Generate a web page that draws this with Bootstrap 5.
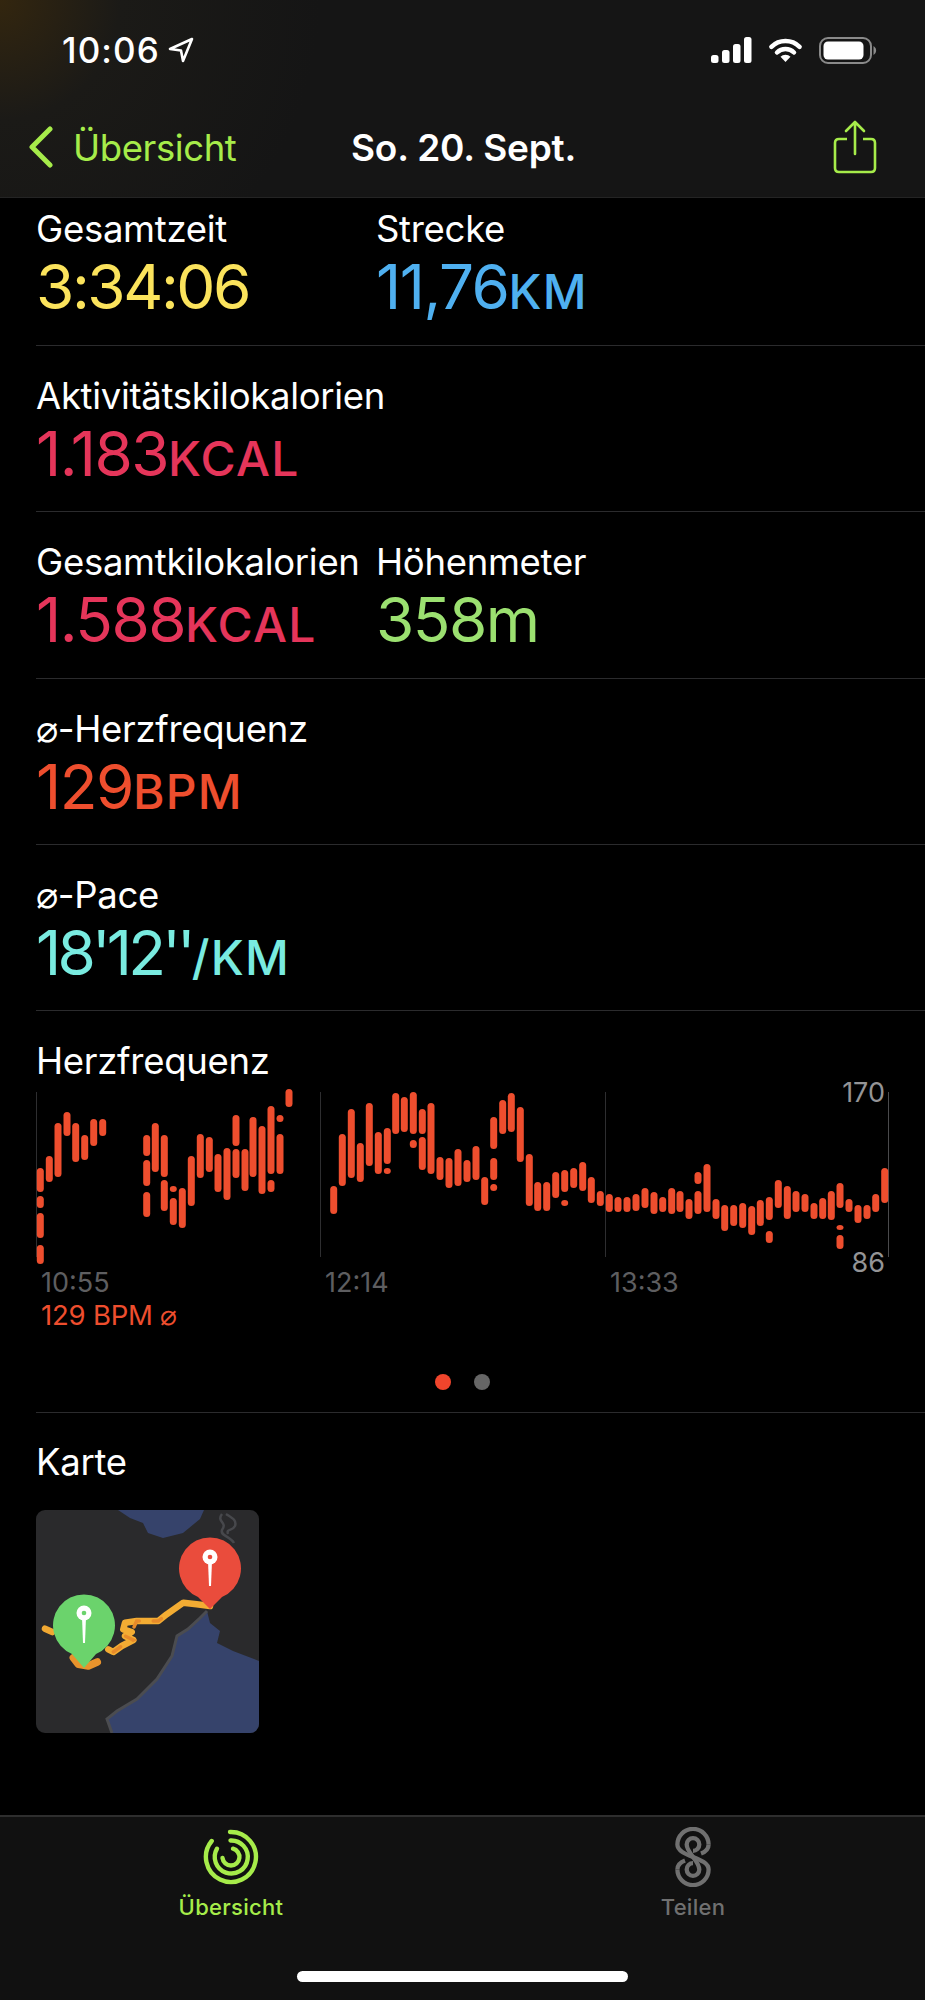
<!DOCTYPE html>
<html lang="de">

<head>
    <meta charset="UTF-8">
    <title>Aktivität</title>
    <meta name="viewport" content="width=device-width, initial-scale=1">
    <link href="https://cdn.jsdelivr.net/npm/bootstrap@5.3.0/dist/css/bootstrap.min.css" rel="stylesheet">
    <style>
        body {
            background-color: #000;
            color: #fff;
            font-family: "Inter", "Liberation Sans", sans-serif;
            width: 925px;
            height: 2000px;
            overflow: hidden;
        }

        .top-area {
            height: 198px;
            background: radial-gradient(circle at 0 0, #33260f 0, #1b1a17 120px, #151515 320px);
            border-bottom: 1px solid #242424;
        }

        .status-line {
            height: 100px;
            padding: 0 48px 0 62px;
        }

        .clock {
            font-size: 35px;
            font-weight: 500;
            letter-spacing: 1.1px;
        }

        .nav-line {
            height: 97px;
            padding: 0 48px 4px 29px;
        }

        .back-text {
            color: #a6ec4a;
            font-size: 36.5px;
            margin: 4px 0 0 18px;
            letter-spacing: -0.4px;
        }

        .nav-title {
            left: 351px;
            top: 20px;
            font-size: 37px;
            font-weight: 600;
            letter-spacing: -0.2px;
        }

        .metric-row {
            height: 166.25px;
            margin-left: 36px;
            padding-top: 28px;
            border-bottom: 1px solid #2b2b2d;
        }

        .first-row {
            height: 148px;
            padding-top: 9px;
        }

        .metric-cell {
            width: 340px;
        }

        .metric-label {
            font-size: 36.5px;
            line-height: 44px;
            letter-spacing: -0.3px;
            white-space: nowrap;
        }

        .metric-value {
            font-size: 62px;
            line-height: 70px;
            margin-top: 1px;
            font-weight: 400;
            letter-spacing: -1.5px;
        }

        .time-value {
            letter-spacing: -2.4px;
        }

        .metric-unit {
            font-size: 48px;
            font-weight: 500;
            text-transform: uppercase;
            letter-spacing: 1.2px;
        }

        .pace-digits {
            letter-spacing: -3.8px;
        }

        .c-yellow { color: #fbe35c; }
        .c-blue { color: #4fb0f0; }
        .c-pink { color: #e5355a; }
        .c-green { color: #9be070; }
        .c-red { color: #ee4e2e; }
        .c-teal { color: #79ebe0; }

        .chart-block {
            height: 402px;
            margin-left: 36px;
            padding-top: 28px;
            border-bottom: 1px solid #2b2b2d;
        }

        .chart-wrap {
            width: 925px;
            margin-left: -36px;
        }

        .chart-canvas {
            margin-top: -8px;
        }

        .chart-note {
            font-size: 27.5px;
            line-height: 30px;
            margin-left: 41px;
            letter-spacing: -0.2px;
        }

        .pager {
            margin: 44px 0 0 -36px;
            gap: 23px;
        }

        .pager-dot {
            width: 16px;
            height: 16px;
            border-radius: 50%;
            background-color: #666;
        }

        .pager-dot.on {
            background-color: #f0452c;
        }

        .map-section {
            margin-left: 36px;
            padding-top: 27px;
        }

        .map-box {
            width: 223px;
            height: 223px;
            margin-top: 26px;
            border-radius: 9px;
        }

        .tab-area {
            height: 185px;
            background-color: #111;
            border-top: 2px solid #2e2e2e;
        }

        .tab-item {
            width: 200px;
            font-size: 22px;
            font-weight: 500;
            padding-top: 10px;
            letter-spacing: 0.3px;
        }

        .tab-on { color: #a6ec4a; }
        .tab-off { color: #707070; }

        .tab-one { margin-left: 131px; }
        .tab-two { margin-left: 262px; }

        .home-bar {
            left: 297px;
            bottom: 18px;
            width: 331px;
            height: 11px;
            border-radius: 6px;
            background-color: #fff;
        }
    </style>
</head>

<body>
    <div class="d-flex flex-column vh-100">
        <header class="top-area flex-shrink-0">
            <div class="status-line d-flex align-items-center">
                <span class="clock">10:06</span>
                <svg class="ms-2" width="26" height="26" viewBox="0 0 26 26"><path d="M24 2 L2 12 L13 13.5 L15 24 Z" fill="none" stroke="#fff" stroke-width="2.6" stroke-linejoin="round"/></svg>
                <div class="ms-auto d-flex align-items-center gap-3">
                    <svg width="41" height="26" viewBox="0 0 41 26"><g fill="#fff"><rect x="0" y="18" width="7.500" height="8" rx="2.500"/><rect x="11" y="13" width="7.500" height="13" rx="2.500"/><rect x="22" y="7" width="7.500" height="19" rx="2.500"/><rect x="33" y="0" width="7.500" height="26" rx="2.500"/></g></svg>
                    <svg width="35" height="26" viewBox="0 0 35 26"><path d="M3.400 9.900 A20 20 0 0 1 31.600 9.900 M9 15.500 A12 12 0 0 1 26 15.500" fill="none" stroke="#fff" stroke-width="4.500" stroke-linecap="round"/><path d="M17.500 25 L12.500 19.800 A7 7 0 0 1 22.500 19.800 Z" fill="#fff"/></svg>
                    <svg width="58" height="27" viewBox="0 0 58 27"><rect x="1" y="1" width="51" height="25" rx="8" fill="none" stroke="#8a8a8a" stroke-width="2"/><rect x="4.500" y="4.500" width="40" height="18" rx="4.500" fill="#fff"/><path d="M54.500 9 C58 11 58 16 54.500 18 Z" fill="#8a8a8a"/></svg>
                </div>
            </div>
            <div class="nav-line d-flex align-items-center position-relative">
                <svg width="26" height="42" viewBox="0 0 26 42"><path d="M21 3 L3 21 L21 39" fill="none" stroke="#a6ec4a" stroke-width="5" stroke-linecap="round" stroke-linejoin="round"/></svg>
                <span class="back-text">Übersicht</span>
                <span class="nav-title position-absolute">So. 20. Sept.</span>
                <svg class="ms-auto" width="44" height="54" viewBox="0 0 44 54"><path d="M14 19 H6 Q2 19 2 23 V48 Q2 52 6 52 H38 Q42 52 42 48 V23 Q42 19 38 19 H30" fill="none" stroke="#a6ec4a" stroke-width="2.600"/><path d="M22 34 V2 M13 11 L22 2 L31 11" fill="none" stroke="#a6ec4a" stroke-width="2.600" stroke-linecap="round" stroke-linejoin="round"/></svg>
            </div>
        </header>

        <main class="flex-grow-1">
            <section class="metric-row first-row d-flex">
                <div class="metric-cell">
                    <div class="metric-label">Gesamtzeit</div>
                    <div class="metric-value time-value c-yellow">3:34:06</div>
                </div>
                <div class="metric-cell">
                    <div class="metric-label">Strecke</div>
                    <div class="metric-value c-blue">11,76<span class="metric-unit">km</span></div>
                </div>
            </section>
            <section class="metric-row d-flex">
                <div class="metric-cell">
                    <div class="metric-label">Aktivitätskilokalorien</div>
                    <div class="metric-value c-pink">1.183<span class="metric-unit">kcal</span></div>
                </div>
            </section>
            <section class="metric-row d-flex">
                <div class="metric-cell">
                    <div class="metric-label">Gesamtkilokalorien</div>
                    <div class="metric-value c-pink">1.588<span class="metric-unit">kcal</span></div>
                </div>
                <div class="metric-cell">
                    <div class="metric-label">Höhenmeter</div>
                    <div class="metric-value c-green">358m</div>
                </div>
            </section>
            <section class="metric-row d-flex">
                <div class="metric-cell">
                    <div class="metric-label">⌀-Herzfrequenz</div>
                    <div class="metric-value c-red">129<span class="metric-unit">bpm</span></div>
                </div>
            </section>
            <section class="metric-row d-flex">
                <div class="metric-cell">
                    <div class="metric-label">⌀-Pace</div>
                    <div class="metric-value c-teal"><span class="pace-digits">18'12''</span><span class="metric-unit">/km</span></div>
                </div>
            </section>

            <section class="chart-block">
                <div class="metric-label">Herzfrequenz</div>
                <div class="chart-wrap">
                    <svg id="hr-chart" class="chart-canvas d-block" width="925" height="225" viewBox="0 1075 925 225"></svg>
                    <div class="chart-note c-red">129 BPM ⌀</div>
                </div>
                <div class="pager d-flex justify-content-center">
                    <span class="pager-dot on"></span>
                    <span class="pager-dot"></span>
                </div>
            </section>

            <section class="map-section">
                <div class="metric-label">Karte</div>
                <svg class="map-box d-block" viewBox="0 0 223 223">
                    <rect width="223" height="223" fill="#2a2a2c"/>
                    <polygon points="82,0 94,8 107,13 112,23 127,28 147,23 164,9 168,0" fill="#36436b"/>
                    <polygon points="171,101 164,108 152,119 141,126 136,146 121,169 101,189 81,201 71,209 76,223 223,223 223,151 197,141 181,133 184,121 174,113" fill="#36436b"/>
                    <polyline points="171,101 164,108 152,119 141,126 136,146 121,169 101,189 81,201 71,209 76,223" fill="none" stroke="#4b4c50" stroke-width="3"/>
                    <path d="M186 4 C180 12 192 12 186 20 C184 26 194 26 198 33 M190 4 C196 8 201 10 199 16 C196 22 190 18 192 24" fill="none" stroke="#47484c" stroke-width="2.500"/>
                    <polyline points="9,118.700 16.300,122" fill="none" stroke="#f1a832" stroke-width="6.500" stroke-linecap="round"/>
                    <polyline points="37.300,147.700 42.300,154.300 52.300,156 61.300,152" fill="none" stroke="#e8932c" stroke-width="7.500" stroke-linecap="round" stroke-linejoin="round"/>
                    <polyline points="72.300,139.300 77.300,142 85.700,136 97.300,130 89,126 95.700,122 87.300,119.300 89,112.700 100.700,111 122.300,111 130.700,104.300 147.300,92.700 160.700,94.300 174,96" fill="none" stroke="#f3ac33" stroke-width="6.500" stroke-linecap="round" stroke-linejoin="round"/>
                    <polyline points="77.300,142 85.700,136 97.300,130 89,126 95.700,122 100.700,111 122.300,111 130.700,104.300" fill="none" stroke="#e78a2a" stroke-width="3.500" stroke-dasharray="9 14" stroke-linecap="round"/>
                    <path d="M48 158 L36 144 A31 31 0 1 1 60 144 Z" fill="#6bd36c"/>
                    <circle cx="48" cy="103" r="7.500" fill="#fff"/>
                    <circle cx="48" cy="103" r="2.300" fill="#6bd36c"/>
                    <path d="M46 107 H50 L49 133 H47 Z" fill="#fff"/>
                    <path d="M174 99 L162 87 A31 31 0 1 1 186 87 Z" fill="#ea4c3c"/>
                    <circle cx="174" cy="47" r="7.500" fill="#fff"/>
                    <circle cx="174" cy="47" r="2.300" fill="#ea4c3c"/>
                    <path d="M172 51 H176 L175 76 H173 Z" fill="#fff"/>
                </svg>
            </section>
        </main>

        <footer class="tab-area flex-shrink-0 position-relative d-flex">
            <div class="tab-item tab-one tab-on text-center">
                <svg class="d-block mx-auto mb-1" width="60" height="60" viewBox="0 0 60 60"><g fill="none" stroke="#a6ec4a" stroke-width="4.400" stroke-linecap="round"><path d="M29 5 A25 25 0 1 1 10.700 14"/><path d="M29.500 13.500 A16.500 16.500 0 1 1 16 21.700"/><path d="M32 21.700 A8.500 8.500 0 1 1 21.500 31"/></g></svg>
                Übersicht
            </div>
            <div class="tab-item tab-two tab-off text-center">
                <svg class="d-block mx-auto mb-1" width="60" height="60" viewBox="0 0 60 60"><g fill="none" stroke="#707070" stroke-width="4.300"><path d="M45.600 17.500 A15.600 15.600 0 0 0 14.400 17.500 C14.400 30 45.600 30 45.600 42.500 A15.600 15.600 0 0 1 14.400 42.500"/><path d="M45.600 17.500 C45.600 22 42 25 38 26.500 M14.400 42.500 C14.400 38 18 35 22 33.500"/><path d="M23.700 17.500 A6.300 6.300 0 1 1 30 23.800 M23.700 17.500 C23.700 26 36.300 34 36.300 42.500 A6.300 6.300 0 1 1 30 36.200"/></g></svg>
                Teilen
            </div>
            <div class="home-bar position-absolute"></div>
        </footer>
    </div>

    <script src="https://cdn.jsdelivr.net/npm/bootstrap@5.3.0/dist/js/bootstrap.bundle.min.js"></script>
    <script>
        // Balken: [x-Mitte, [y-Start, y-Ende], ...] in Seitenkoordinaten
        const bars = [
            [40.3, [1168, 1192], [1196, 1208], [1213, 1238], [1245, 1264]],
            [49.3, [1156, 1182]], [58, [1123, 1177]], [67, [1112, 1136]], [75.7, [1123, 1162]],
            [84.7, [1135, 1160]], [93.7, [1119, 1146]], [102.7, [1119, 1136]],
            [146.7, [1135, 1156], [1160, 1186], [1192, 1217]], [155.3, [1123, 1172]],
            [164.3, [1135, 1177], [1180, 1211]], [173.3, [1186, 1192], [1198, 1225]], [182.3, [1188, 1228]],
            [191.3, [1156, 1206]], [200.3, [1134, 1178]], [209.3, [1137, 1172]], [218, [1154, 1192]],
            [227, [1148, 1200]], [236, [1115, 1146], [1149, 1178]], [245, [1149, 1191]], [253, [1117, 1177]],
            [262, [1126, 1194]], [271, [1106, 1174], [1180, 1192]], [280, [1115, 1122], [1134, 1174]],
            [289, [1089, 1107]],
            [333.7, [1186, 1214]], [342.3, [1134, 1186]], [351.3, [1109, 1178]], [360.3, [1143, 1182]],
            [369.3, [1103, 1166]], [378.3, [1132, 1174]], [387.3, [1128, 1164], [1168, 1174]],
            [395.7, [1093, 1134]], [404.3, [1097, 1132]], [413.3, [1092, 1134], [1140, 1148]],
            [422.3, [1109, 1134], [1137, 1170]], [431, [1103, 1174]], [440, [1157, 1180]],
            [449, [1158, 1188]], [458, [1149, 1186]], [467, [1160, 1182]], [476, [1146, 1180]],
            [484.7, [1177, 1205]], [493.7, [1117, 1149], [1158, 1180], [1184, 1191]], [502.7, [1100, 1134]],
            [511.3, [1093, 1132]], [520.3, [1107, 1162]], [529.3, [1154, 1206]], [537.7, [1182, 1211]],
            [546.7, [1182, 1211]], [555.7, [1172, 1198]], [564.7, [1170, 1192], [1200, 1206]],
            [573.7, [1168, 1188]], [582.7, [1162, 1191]], [591.3, [1177, 1203]], [600.3, [1191, 1206]],
            [609.3, [1194, 1212]], [618, [1197, 1212]], [627, [1197, 1212]], [636, [1194, 1211]],
            [645, [1188, 1208]], [654, [1192, 1214]], [662.7, [1197, 1212]], [671.7, [1188, 1214]],
            [680, [1191, 1212]], [689, [1199, 1219]], [698, [1172, 1184], [1191, 1214]], [707, [1164, 1212]],
            [716, [1199, 1219]], [724.7, [1205, 1231]], [733.7, [1205, 1226]], [742.7, [1203, 1228]],
            [751.7, [1206, 1235]], [760.3, [1200, 1226]], [769.3, [1197, 1220], [1231, 1243]],
            [778.3, [1180, 1208]], [787.3, [1186, 1219]], [796, [1191, 1212]], [805, [1194, 1212]],
            [814, [1203, 1219]], [822.7, [1198, 1219]], [831.3, [1191, 1220]], [840, [1183, 1208], [1225, 1230], [1235, 1249]],
            [849, [1199, 1212]], [858, [1205, 1223]], [867, [1205, 1219]], [875.7, [1194, 1212]], [884.7, [1168, 1203]]
        ];

        // Raster und Beschriftung nach den Balken ergänzen
        const chart = document.getElementById('hr-chart');
        let svg = '';
        [36.5, 320.5, 605.5, 888.5].forEach((x, i) => {
            const color = i === 3 ? '#4a4a4c' : '#2e2e30';
            svg += `<line x1="${x}" x2="${x}" y1="1092" y2="1257" stroke="${color}" stroke-width="1"/>`;
        });
        bars.forEach(bar => {
            const x = bar[0];
            bar.slice(1).forEach(seg => {
                svg += `<rect x="${x - 3.5}" y="${seg[0]}" width="7" height="${seg[1] - seg[0]}" rx="3.5" fill="#ee4e2e"/>`;
            });
        });
        [['10:55', 41], ['12:14', 325], ['13:33', 610]].forEach(label => {
            svg += `<text x="${label[1]}" y="1292" font-size="27" fill="#5e5e60">${label[0]}</text>`;
        });
        svg += '<text x="885" y="1102" font-size="27" text-anchor="end" fill="#949496">170</text>';
        svg += '<text x="885" y="1272" font-size="27" text-anchor="end" fill="#949496">86</text>';
        chart.innerHTML = svg;
    </script>
</body>

</html>
